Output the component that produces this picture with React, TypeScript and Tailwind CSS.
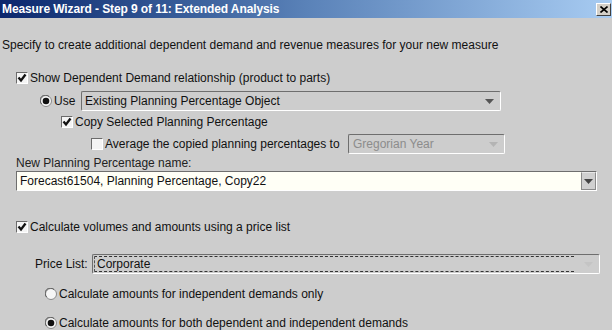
import React from "react";

const Check = ({ checked }: { checked: boolean }) => (
  <span className="inline-flex w-[12px] h-[12px] shrink-0 border border-t-[#6b6b6b] border-l-[#6b6b6b] border-b-[#ffffff] border-r-[#ffffff] bg-[#f4f4f4] items-center justify-center">
    {checked && (
      <svg width="10" height="10" viewBox="0 0 10 10">
        <path d="M1.5 4.5 L4 7.5 L8.5 1.5" stroke="#111" strokeWidth="2.3" fill="none" />
      </svg>
    )}
  </span>
);

const Radio = ({ checked }: { checked: boolean }) => (
  <svg width="12" height="12" viewBox="0 0 12 12" className="shrink-0">
    <circle cx="6" cy="6" r="5.5" fill="#f6f6f6" stroke="#8a8a8a" />
    <path d="M1.6 9 A5 5 0 0 1 9 1.6" stroke="#5a5a5a" fill="none" />
    {checked && <circle cx="6" cy="6" r="3.3" fill="#111" />}
  </svg>
);

const Arrow = ({ color }: { color: string }) => (
  <svg width="9" height="5" viewBox="0 0 9 5">
    <path d="M0 0 H9 L4.5 5 Z" fill={color} />
  </svg>
);

export default function App() {
  return (
    <div
      className="w-[612px] h-[330px] bg-[#cdcdcd] overflow-hidden text-[12px] leading-[14px] text-[#111]"
      style={{ fontFamily: '"Liberation Sans", Arial, sans-serif' }}
    >
      {/* Title bar */}
      <div className="h-[18px] flex items-center justify-between bg-gradient-to-r from-[#0b266c] via-[#5a82b8] to-[#a8ccf2] pl-[2px] pr-[1px]">
        <span className="text-white font-bold text-[12px] tracking-[-0.1px]">
          Measure Wizard - Step 9 of 11: Extended Analysis
        </span>
        <span className="w-[15px] h-[13px] bg-[#d4d0c8] border border-t-white border-l-white border-b-[#404040] border-r-[#404040] flex items-center justify-center">
          <svg width="8" height="7" viewBox="0 0 8 7">
            <path d="M0.5 0.5 L7.5 6.5 M7.5 0.5 L0.5 6.5" stroke="#000" strokeWidth="1.6" />
          </svg>
        </span>
      </div>

      <div className="mt-[20px] pl-[2px] h-[14px]">
        Specify to create additional dependent demand and revenue measures for your new measure
      </div>

      <div className="mt-[19px] pl-[16px] h-[14px] flex items-center gap-[2px]">
        <Check checked />
        <span>Show Dependent Demand relationship (product to parts)</span>
      </div>

      <div className="mt-[6px] pl-[40px] h-[20px] flex items-center">
        <Radio checked />
        <span className="ml-[2px] w-[27px]">Use</span>
        <div className="w-[420px] h-[20px] flex items-center justify-between border border-t-[#6e6e6e] border-l-[#6e6e6e] border-b-white border-r-white rounded-[2px] pl-[3px] pr-[6px]">
          <span>Existing Planning Percentage Object</span>
          <Arrow color="#555" />
        </div>
      </div>

      <div className="mt-[4px] pl-[61px] h-[14px] flex items-center gap-[2px]">
        <Check checked />
        <span>Copy Selected Planning Percentage</span>
      </div>

      <div className="mt-[5px] pl-[91px] h-[20px] flex items-center">
        <Check checked={false} />
        <span className="ml-[2px] w-[243px]">Average the copied planning percentages to</span>
        <div className="w-[157px] h-[20px] flex items-center justify-between border border-t-[#6e6e6e] border-l-[#6e6e6e] border-b-white border-r-white rounded-[2px] pl-[4px] pr-[6px] text-[#8c8c8c]">
          <span>Gregorian Year</span>
          <Arrow color="#b4b4b4" />
        </div>
      </div>

      <div className="mt-[2px] pl-[16px] h-[14px] text-[#222]">New Planning Percentage name:</div>

      <div className="mt-[1px] ml-[16px] w-[581px] h-[20px] flex border border-t-[#6e6e6e] border-l-[#6e6e6e] border-b-white border-r-white bg-[#fffff6]">
        <div className="flex-1 flex items-center pl-[3px]">Forecast61504, Planning Percentage, Copy22</div>
        <div className="w-[15px] h-full bg-[#d0d0d0] border border-t-[#e8e8e8] border-l-[#8a8a8a] border-b-[#8a8a8a] border-r-[#8a8a8a] flex items-center justify-center">
          <Arrow color="#444" />
        </div>
      </div>

      <div className="mt-[29px] pl-[16px] h-[14px] flex items-center gap-[2px]">
        <Check checked />
        <span>Calculate volumes and amounts using a price list</span>
      </div>

      <div className="mt-[20px] pl-[35px] h-[20px] flex items-center">
        <span className="w-[57px]">Price List:</span>
        <div className="w-[508px] h-[20px] flex items-center border border-t-[#6e6e6e] border-l-[#6e6e6e] border-b-white border-r-white rounded-[2px] pl-[1px] pr-[6px]">
          <div className="flex-1 h-[16px] flex items-center border-y border-dashed border-[#333] border-l border-l-[#555] pl-[2px]">Corporate</div>
          <span className="ml-[10px]"><Arrow color="#c4c4c4" /></span>
        </div>
      </div>

      <div className="mt-[13px] pl-[45px] h-[14px] flex items-center gap-[2px]">
        <Radio checked={false} />
        <span>Calculate amounts for independent demands only</span>
      </div>

      <div className="mt-[15px] pl-[45px] h-[14px] flex items-center gap-[2px]">
        <Radio checked />
        <span>Calculate amounts for both dependent and independent demands</span>
      </div>
    </div>
  );
}
